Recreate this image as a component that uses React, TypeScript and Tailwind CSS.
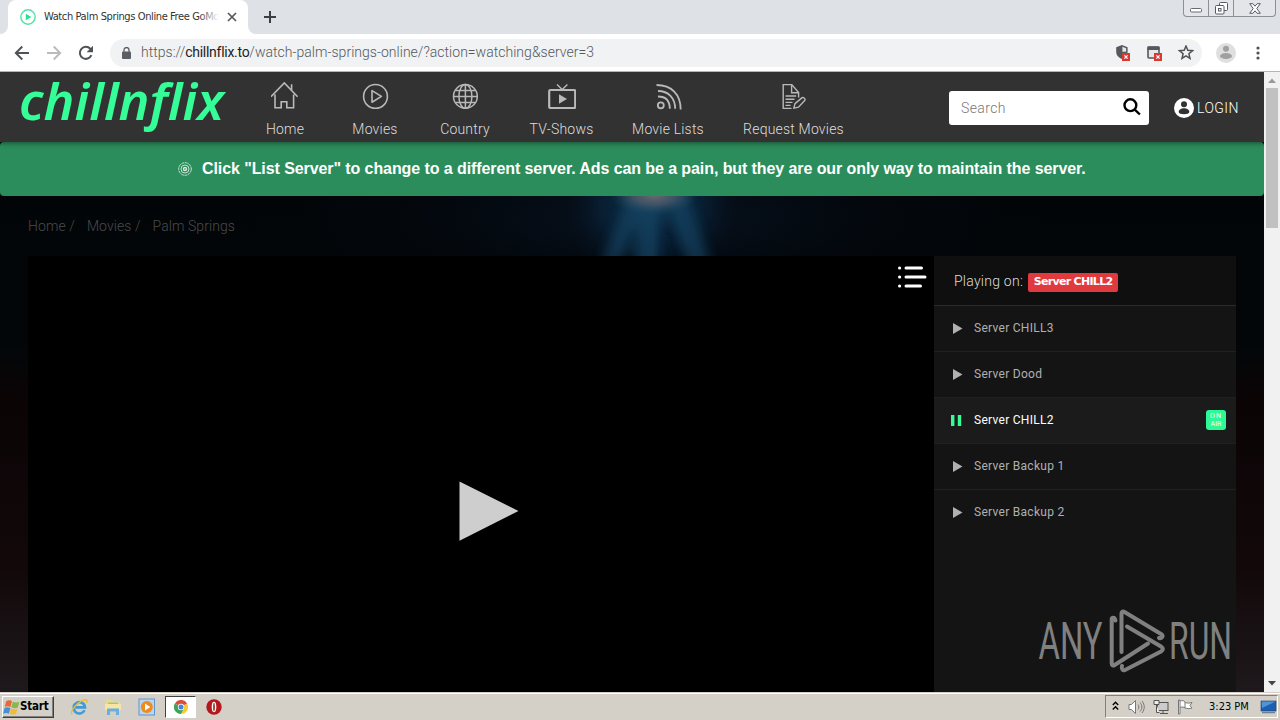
import { ReactNode } from "react"

const ICON_STROKE = "#b9b9b9"

const HomeIcon = () => (
  <svg width="28" height="28" viewBox="0 0 28 28" fill="none" stroke={ICON_STROKE} strokeWidth="1.6">
    <path d="M0 14.7 13.3 .9l13.300 13.800M4 12.500v13.300h6.200v-6h5.600v6h6.800V12.500M20.600 7.900V2.300" />
  </svg>
)

const MoviesIcon = () => (
  <svg width="28" height="28" viewBox="0 0 28 28" fill="none" stroke={ICON_STROKE} strokeWidth="1.6">
    <circle cx="14.500" cy="14.400" r="11.900" />
    <path d="M11 8.600v11.600l9.400-5.800z" strokeLinejoin="round" />
  </svg>
)

const GlobeIcon = () => (
  <svg width="28" height="28" viewBox="0 0 28 28" fill="none" stroke={ICON_STROKE} strokeWidth="1.5">
    <circle cx="14.400" cy="14.400" r="11.900" />
    <ellipse cx="14.400" cy="14.400" rx="6.500" ry="11.900" />
    <path d="M14.400 2.500v23.800M2.500 14.400h23.800M4.600 8.400h19.600M4.600 20.400h19.600" />
  </svg>
)

const TvIcon = () => (
  <svg width="28" height="28" viewBox="0 0 28 28" fill="none" stroke={ICON_STROKE}>
    <rect x="1.200" y="8" width="26" height="18" rx="1.200" strokeWidth="2.200" />
    <path d="m9 2.500 5.200 5 5.200-5" strokeWidth="1.400" />
    <path d="M11 12.200v9.600l8-4.800z" fill={ICON_STROKE} stroke="none" />
  </svg>
)

const FeedIcon = () => (
  <svg width="28" height="28" viewBox="0 0 28 28" fill="none" stroke={ICON_STROKE} strokeWidth="1.8">
    <circle cx="6.800" cy="23.300" r="3" />
    <path d="M4 14.500c7.600 0 11.800 4.400 11.800 12.300M4 9C14.300 9 21.200 15.900 21.200 26.800M2.500 3C17.500 3 26.700 12.200 26.700 27.500" />
  </svg>
)

const RequestIcon = () => (
  <svg width="28" height="28" viewBox="0 0 28 28" fill="none" stroke={ICON_STROKE} strokeWidth="1.4">
    <path d="M11.500 26.400H3.200V2.600h8.600l6.800 8v5M11.600 2.800v8h7M5.500 14h10.600M5.500 17.200h9M5.500 20.400h7M5.500 23.400h5" />
    <path d="m15 21.600 7.200-6c1-.8 3.700 1.400 2.700 2.700l-6.400 6.900-4.700.9z" />
  </svg>
)

type NavItemProps = {
  label: string
  icon: ReactNode
  className: string
}

const NavItem = ({ label, icon, className }: NavItemProps) => (
  <a className={`flex flex-col items-center ${className}`}>
    {icon}
    <span className="mt-[9px] text-[14px] leading-5 whitespace-nowrap font-light tracking-[0.2px] text-[#dedede]">{label}</span>
  </a>
)

const servers = [
  { name: "Server CHILL3", active: false },
  { name: "Server Dood", active: false },
  { name: "Server CHILL2", active: true },
  { name: "Server Backup 1", active: false },
  { name: "Server Backup 2", active: false },
]

const ServerRow = ({ name, active }: { name: string; active: boolean }) => (
  <li className={`flex h-[46px] items-center border-b border-[#202020] pr-[10px] pb-[2px] pl-[17px] last:border-transparent ${active ? "bg-[#1b1b1b]" : ""}`}>
    {active ? (
      <svg width="12" height="12" className="mr-[11px]" viewBox="0 0 12 12" fill="#35fd97">
        <path d="M0 1h3.400v11H0zM6.800 1h3.400v11H6.800z" />
      </svg>
    ) : (
      <svg width="12" height="12" className="mr-[11px]" viewBox="0 0 12 12" fill="#b0b0b0">
        <path d="M2 1v11l9.500-5.500z" />
      </svg>
    )}
    <span className={`text-[12px] tracking-[0.28px] ${active ? "text-white" : "text-[#b0b0b0]"}`}>{name}</span>
    {active && (
      <span className="ml-auto flex size-5 flex-col items-center justify-center rounded-[3px] bg-[#2dfa94] text-[7px] leading-[8px] text-white">
        <span className="tracking-[1px]">ON</span>
        <span>AIR</span>
      </span>
    )}
  </li>
)

const TabStrip = () => (
  <div className="flex h-[34px] justify-between bg-[#dee1e6]">
    <div className="flex">
      <div className="flex w-2 items-end bg-white">
        <div className="h-full w-full rounded-br-lg bg-[#dee1e6]" />
      </div>
      <div className="flex w-60 items-center rounded-t-lg bg-white pl-3">
        <svg width="16" height="16" viewBox="0 0 16 16" fill="none">
          <circle cx="8" cy="8" r="7.200" stroke="#4fe3a7" strokeWidth="1.400" />
          <path d="M5.800 4.800v6.400L11.300 8z" fill="#1fe58d" />
        </svg>
        <div className="relative mt-px ml-2 w-[175px] overflow-hidden font-['DejaVu_Sans_Condensed','DejaVu_Sans',sans-serif] text-[11px] tracking-[-0.39px] whitespace-nowrap text-[#333]">
          Watch Palm Springs Online Free GoMo
          <div className="absolute inset-y-0 right-0 w-5 bg-linear-to-r from-transparent to-white" />
        </div>
        <svg className="ml-2" width="10" height="10" viewBox="0 0 10 10" stroke="#55585c" strokeWidth="1.700">
          <path d="m1 1 8 8M9 1 1 9" />
        </svg>
      </div>
      <div className="w-2 bg-white">
        <div className="h-full w-full rounded-bl-lg bg-[#dee1e6]" />
      </div>
      <svg className="mt-[11px] ml-2" width="12" height="12" viewBox="0 0 12 12" stroke="#3b3f44" strokeWidth="2">
        <path d="M6 0v12M0 6h12" />
      </svg>
    </div>
    <div className="mr-1 flex h-[17px] w-[93px] rounded-b border border-t-0 border-[#8b8f96] bg-[#e3e5e9]">
      <div className="flex w-[25px] items-center justify-center border-r border-[#8b8f96]">
        <svg width="12" height="16" viewBox="0 0 12 16" fill="#fff" stroke="#666b76">
          <rect x="0.500" y="8.500" width="11" height="3.500" rx="1" />
        </svg>
      </div>
      <div className="flex w-[25px] items-center justify-center border-r border-[#8b8f96]">
        <svg width="13" height="14" viewBox="0 0 13 14" fill="#fff" stroke="#555a66">
          <rect x="4.500" y="1.500" width="8" height="8" rx="1" />
          <rect x="0.500" y="4.500" width="8.500" height="8.500" rx="1" />
          <rect x="3.500" y="7.500" width="2.500" height="2.500" />
        </svg>
      </div>
      <div className="flex flex-1 items-center justify-center">
        <svg width="12" height="11" viewBox="0 0 12 11" fill="#fff" stroke="#555a66">
          <path d="M.7.7h3.200L6 3.200 8.100.7h3.200L7.800 5.500l3.500 4.800H8.100L6 7.800l-2.100 2.500H.7l3.500-4.800z" />
        </svg>
      </div>
    </div>
  </div>
)

const Toolbar = () => (
  <div className="flex h-[38px] items-center border-b border-[#b5b5b5] bg-white pl-[14px]">
    <svg width="16" height="16" viewBox="0 0 16 16" fill="none" stroke="#505356" strokeWidth="1.900">
      <path d="M15 8H2M8.300 1.500 1.800 8l6.500 6.500" />
    </svg>
    <svg className="ml-4" width="16" height="16" viewBox="0 0 16 16" fill="none" stroke="#b9bbbd" strokeWidth="1.900">
      <path d="M1 8h13M7.700 1.500 14.200 8l-6.500 6.500" />
    </svg>
    <svg className="ml-4" width="16" height="16" viewBox="0 0 16 16" fill="none" stroke="#505356" strokeWidth="2">
      <path d="M13.400 10.200A6 6 0 1 1 12.300 3.800l1.500 1.600" />
      <path d="M15 .8v6.400H8.600z" fill="#505356" stroke="none" />
    </svg>
    <div className="ml-4 flex h-7 w-[1092px] items-center rounded-full bg-[#f0f2f4] pr-[8px] pl-[12px]">
      <svg width="9" height="12" viewBox="0 0 9 12" fill="#5c5f63">
        <rect y="4.500" width="9" height="7.500" rx="1" />
        <path d="M2 5V3a2.500 2.500 0 0 1 5 0v2" fill="none" stroke="#5c5f63" strokeWidth="1.300" />
      </svg>
      <span className="ml-[10px] text-[14px] font-light tracking-[0.02px] whitespace-nowrap text-[#55585c]">
        https://<span className="font-normal tracking-[-0.28px] text-[#222]">chillnflix.to</span>/watch-palm-springs-online/?action=watching&amp;server=3
      </span>
      <svg className="ml-auto" width="15" height="17" viewBox="0 0 15 17">
        <path d="M7 1 1.200 3.200v4.600c0 3.400 2.400 6 5.800 7.200 3.400-1.200 5.600-3.800 5.600-7.200V3.200z" fill="#55585c" />
        <path d="M7.400 2.800v5h3.700V4.300z" fill="#e5e7e9" />
        <rect x="7" y="9" width="8" height="8" fill="#d83a31" />
        <path d="m9.400 11.400 3.200 3.200m0-3.200-3.200 3.200" stroke="#fff" strokeWidth="1.200" />
      </svg>
      <svg className="ml-[17px]" width="15" height="17" viewBox="0 0 15 17">
        <rect x="1" y="3" width="11" height="11" rx="1" fill="#e5e7e9" stroke="#55585c" strokeWidth="1.600" />
        <path d="M.5 2.500h12V6H.5z" fill="#55585c" />
        <rect x="7" y="9" width="8" height="8" fill="#d83a31" />
        <path d="m9.400 11.400 3.200 3.200m0-3.200-3.200 3.200" stroke="#fff" strokeWidth="1.200" />
      </svg>
      <svg className="ml-4" width="16" height="16" viewBox="0 0 16 16" fill="none" stroke="#505356" strokeWidth="1.500">
        <path d="m8 1 1.800 4.300 4.700.4-3.600 3 1.100 4.600L8 10.800 4 13.300l1.100-4.600-3.600-3 4.700-.4z" />
      </svg>
    </div>
    <svg className="ml-[14px]" width="20" height="20" viewBox="0 0 20 20">
      <circle cx="10" cy="10" r="10" fill="#dfdfdf" />
      <circle cx="10" cy="5.800" r="3" fill="#a0a0a0" />
      <ellipse cx="10" cy="13" rx="6" ry="3" fill="#a0a0a0" />
    </svg>
    <svg className="ml-5" width="4" height="14" viewBox="0 0 4 14" fill="#505356">
      <circle cx="2" cy="2" r="1.600" />
      <circle cx="2" cy="7" r="1.600" />
      <circle cx="2" cy="12" r="1.600" />
    </svg>
  </div>
)

const SiteHeader = () => (
  <header className="relative z-10 flex h-[70px] bg-[#323232] shadow-[0_2px_4px_rgba(0,0,0,0.35)]">
    <svg className="ml-[18px] shrink-0 overflow-visible" width="222" height="70">
      <text x="1" y="47.500" textLength="205" lengthAdjust="spacingAndGlyphs" fontSize="50" fontWeight="600" fontStyle="italic" fill="#35fd97" className="font-['Noto_Sans','Open_Sans',sans-serif]">
        chillnflix
      </text>
    </svg>
    <nav className="flex pt-[10px]">
      <NavItem label="Home" icon={<HomeIcon />} className="w-[90px]" />
      <NavItem label="Movies" icon={<MoviesIcon />} className="w-[90px]" />
      <NavItem label="Country" icon={<GlobeIcon />} className="w-[90px]" />
      <NavItem label="TV-Shows" icon={<TvIcon />} className="w-[103px]" />
      <NavItem label="Movie Lists" icon={<FeedIcon />} className="w-[110px]" />
      <NavItem label="Request Movies" icon={<RequestIcon />} className="w-[141px]" />
    </nav>
    <div className="mt-[19px] ml-[85px] flex h-[34px] w-[200px] items-center justify-between rounded-[3px] bg-white pr-2 pl-3">
      <span className="text-[14px] font-light tracking-[0.400px] text-[#777]">Search</span>
      <svg className="mb-[3px]" width="18" height="18" viewBox="0 0 18 18" fill="none" stroke="#000" strokeWidth="2.400">
        <circle cx="7.400" cy="7.200" r="5.900" />
        <path d="m11.500 11.300 5.400 5.200" />
      </svg>
    </div>
    <div className="mt-[25px] ml-[25px] flex h-[22px] items-center">
      <svg width="20" height="20" viewBox="0 0 20 20">
        <circle cx="10" cy="10" r="10" fill="#fff" />
        <circle cx="10" cy="6.200" r="3" fill="#323232" />
        <path d="M4.700 14c0-5 10.600-5 10.600 0 0 3-10.600 3-10.600 0z" fill="#323232" />
      </svg>
      <span className="ml-[3px] text-[14px] font-light tracking-[0.45px] text-white">LOGIN</span>
    </div>
  </header>
)

const Notice = () => (
  <div className="flex h-[54px] items-center rounded bg-[#2b8d5b] pl-[178px]">
    <svg width="14" height="14" viewBox="0 0 14 14" fill="none" stroke="#d5eadf">
      <circle cx="7" cy="7" r="6.300" strokeWidth=".9" strokeDasharray="3 .6" />
      <circle cx="7" cy="7" r="4" strokeWidth=".9" />
      <circle cx="7" cy="7" r="1.500" strokeWidth="1.400" />
    </svg>
    <span className="ml-[10px] font-['Liberation_Sans',sans-serif] text-[16px] font-bold tracking-[-0.085px] whitespace-nowrap text-white">
      Click "List Server" to change to a different server. Ads can be a pain, but they are our only way to maintain the server.
    </span>
  </div>
)

const Watermark = () => (
  <svg className="absolute top-[534px] left-[1036px] overflow-visible" width="210" height="76" viewBox="0 0 210 76">
    <g fill="#808080" fontSize="52" className="font-[Roboto,sans-serif]">
      <text x="2.500" y="53" textLength="64" lengthAdjust="spacingAndGlyphs">ANY</text>
      <text x="133" y="53" textLength="63" lengthAdjust="spacingAndGlyphs">RUN</text>
    </g>
    <g fill="none" stroke="#808080" strokeWidth="4" strokeLinecap="round" strokeLinejoin="round">
      <path d="M79.500 14.500c-1-4-3.800-3-3.800-1V57.500c0 2 1.500 2.500 3 1.500L112 37.500" />
      <path d="M85.500 46V7.500c0-2 1.500-2.500 3-1.500L125 28c3 2 1 5-2 4" />
      <path d="m91 20.500 34 20c2.500 1.500 2.500 3.500 0 5L89 64c-2 1-4-1-3-4" />
    </g>
  </svg>
)

const Player = () => (
  <div className="flex h-[436px] w-[1208px] overflow-hidden">
    <div className="relative flex h-[510px] w-[906px] items-center bg-black pl-[431px]">
      <svg width="60" height="60" viewBox="0 0 60 60" fill="#cecece">
        <path d="M.5.500v59.300L59.500 30z" />
      </svg>
      <svg className="absolute top-[9px] right-[7px]" width="30" height="24" viewBox="0 0 30 24" stroke="#fff" strokeWidth="3" strokeLinecap="round">
        <path d="M9 3h15.500M9 12h19M9 21h14.500M2.500 3h.2M2.500 12h.2M2.500 21h.2" />
      </svg>
    </div>
    <aside className="h-[510px] w-[302px] bg-[#141414]">
      <div className="flex h-[50px] items-center border-b border-[#2b2b2b] bg-[#0f0f0f] pl-5">
        <span className="mt-px text-[14px] font-light tracking-[0.250px] text-[#ddd]">Playing on:</span>
        <span className="mt-[3px] ml-[5px] flex h-[19px] w-[90px] items-center justify-center rounded-[2px] bg-[#e0393e] pt-px font-['DejaVu_Sans',sans-serif] text-[11px] font-bold tracking-[-0.700px] whitespace-nowrap text-white">
          Server CHILL2
        </span>
      </div>
      <ul>
        {servers.map((server) => (
          <ServerRow key={server.name} name={server.name} active={server.active} />
        ))}
      </ul>
    </aside>
  </div>
)

const Backdrop = () => (
  <svg className="absolute inset-0" width="1264" height="620">
    <defs>
      <radialGradient id="glow">
        <stop offset="0" stopColor="#0e3a55" stopOpacity=".9" />
        <stop offset=".55" stopColor="#0a2740" stopOpacity=".6" />
        <stop offset="1" stopColor="#050a14" stopOpacity="0" />
      </radialGradient>
      <radialGradient id="core">
        <stop offset="0" stopColor="#6f6a70" />
        <stop offset=".5" stopColor="#4e5a68" stopOpacity=".7" />
        <stop offset="1" stopColor="#20485f" stopOpacity="0" />
      </radialGradient>
      <radialGradient id="haze">
        <stop offset="0" stopColor="#071321" />
        <stop offset="1" stopColor="#030509" stopOpacity="0" />
      </radialGradient>
      <linearGradient id="side" x1="0" x2="0" y1="0" y2="1">
        <stop offset="0" stopColor="#020407" />
        <stop offset=".44" stopColor="#030609" />
        <stop offset=".52" stopColor="#0a0405" />
        <stop offset=".8" stopColor="#12080a" />
        <stop offset="1" stopColor="#1e191c" />
      </linearGradient>
      <filter id="soft" x="-30%" y="-30%" width="160%" height="160%">
        <feGaussianBlur stdDeviation="6" />
      </filter>
    </defs>
    <rect width="1264" height="620" fill="url(#side)" />
    <ellipse cx="650" cy="145" rx="400" ry="110" fill="url(#haze)" />
    <ellipse cx="652" cy="130" rx="95" ry="90" fill="url(#glow)" />
    <g fill="#14486b" opacity=".6" filter="url(#soft)">
      <path d="M635 120h28l-2 80h-24zM660 118l24-4 26 76-18 10zM630 120l14 8-26 66-16-4z" />
    </g>
    <path d="M664 140l14 60h-18z" fill="#04101d" opacity=".5" filter="url(#soft)" />
    <ellipse cx="654" cy="123" rx="44" ry="20" fill="url(#core)" />
  </svg>
)

const ScrollBar = () => (
  <div className="flex w-4 flex-col items-center bg-[#f1f1f1]">
    <svg width="16" height="16" viewBox="0 0 16 16" fill="#999">
      <path d="M4 11h8L8 6.500z" />
    </svg>
    <div className="h-[140px] w-3 bg-[#c1c1c1]" />
    <svg className="mt-auto" width="16" height="16" viewBox="0 0 16 16" fill="#444">
      <path d="M4 5h8L8 9.500z" />
    </svg>
  </div>
)

const TaskBar = () => (
  <footer className="flex h-7 items-center border-t border-[#d4d0c8] bg-[#d4d0c8] pl-[2px] shadow-[inset_0_1px_0_#fff]">
    <button className="flex h-[22px] w-[52px] items-center border border-t-white border-r-[#404040] border-b-[#404040] border-l-white pt-px font-['DejaVu_Sans_Condensed','DejaVu_Sans',sans-serif] text-[11.500px] font-bold tracking-[-0.200px] text-black shadow-[inset_-1px_-1px_0_#808080]">
      <svg className="shrink-0" width="17" height="17" viewBox="0 0 16 16">
        <path d="M3 2c2-1 4-1 5.500.200L7 7.600C5.500 6.600 3.500 6.600 1.700 7.400z" fill="#e8683a" />
        <path d="M9.300 2.600c2 1 4 1 6 0L14 8c-2 1-4 1-6.200-.2z" fill="#86b84a" />
        <path d="M1.500 8.300c2-.8 4-.7 5.500.2l-1.500 5.300C4 13 2 13 0 13.800z" fill="#4a8fd0" />
        <path d="M7.600 8.800c2 1 4 1.100 6.100.2L12.300 14c-2 .9-4 .9-6.100-.2z" fill="#f0bb3a" />
      </svg>
      Start
    </button>
    {/* Internet Explorer */}
    <svg className="ml-4" width="18" height="18" viewBox="0 0 18 18" fill="none">
      <path d="M14.500 12.200A5.700 5.700 0 1 1 15 9.400H5" stroke="#3d9bd9" strokeWidth="2.600" />
      <path d="M2 16.200C-.5 13 9 2.200 16 1.800c1.600 0 1 2.200.4 3" stroke="#e8bd3c" strokeWidth="1.400" />
    </svg>
    {/* Explorer */}
    <svg className="ml-4" width="18" height="18" viewBox="0 0 18 18">
      <path d="M2 2h6l1.500 1.500H16V14H2z" fill="#f0d98b" />
      <path d="M4 4.500h10V9H4z" fill="#91cd91" />
      <path d="M1 6h16v6H1z" fill="#f6e6a6" />
      <path d="M3 17v-6.500h12V17h-3v-3.500H6V17z" fill="#68aede" />
    </svg>
    {/* Media player */}
    <svg className="ml-4" width="18" height="18" viewBox="0 0 18 18">
      <rect x="1" y="1" width="15.500" height="16" fill="#b6d6f2" stroke="#6196cd" />
      <circle cx="8.800" cy="9" r="6" fill="#ef8a1d" />
      <path d="M7 5.600v6.800L12.300 9z" fill="#fff" />
    </svg>
    <div className="ml-[9px] flex h-[22px] w-[31px] items-center justify-center border border-t-[#404040] border-r-white border-b-white border-l-[#404040] bg-white">
      <svg width="14" height="14" viewBox="0 0 14 14">
        <path d="M7 7 .9 3.500A7 7 0 0 1 13.100 3.500z" fill="#df4b3b" />
        <path d="M7 7 .9 3.500A7 7 0 0 0 7 14l3-5z" fill="#3da456" />
        <path d="M7 7h0l6.100-3.500A7 7 0 0 1 7 14l3-5.300z" fill="#f6c935" />
        <circle cx="7" cy="7" r="3.200" fill="#fff" />
        <circle cx="7" cy="7" r="2.500" fill="#4384df" />
      </svg>
    </div>
    <svg className="ml-[10px]" width="16" height="16" viewBox="0 0 16 16">
      <circle cx="8" cy="8" r="7.700" fill="#b3181d" />
      <ellipse cx="8" cy="8" rx="2.300" ry="5.200" fill="#fff" />
      <ellipse cx="8" cy="8" rx="1" ry="4.300" fill="#a3474a" />
    </svg>
    <div className="mr-0.5 ml-auto flex h-[23px] w-[173px] items-center border border-t-[#808080] border-r-white border-b-white border-l-[#808080] pl-[6px]">
      <svg className="mb-[2px]" width="7" height="10" viewBox="0 0 7 10" fill="none" stroke="#000" strokeWidth="1.400">
        <path d="m.8 4 2.700-2.700L6.200 4M.8 8.500l2.700-2.700 2.700 2.700" />
      </svg>
      <svg className="ml-[9px]" width="17" height="16" viewBox="0 0 17 16" fill="none" stroke="#777">
        <path d="M1 5.500h2.500L7.500 1.500v13L3.500 10.500H1z" fill="#fff" />
        <path d="M10 5.500c1.200 1.500 1.200 3.500 0 5M12 3.500c2.500 3 2.500 6 0 9M14 2c3 4 3 8 0 12" />
      </svg>
      <svg className="ml-[8px]" width="16" height="16" viewBox="0 0 16 16" fill="#eee" stroke="#555">
        <rect x="4.500" y="3.500" width="10.500" height="8" fill="#ccc" />
        <path d="M7 14.500h8M10 12v2" />
        <path d="M1 1.500h5v4H1zM3.500 5.500v8h3" />
      </svg>
      <svg className="ml-[8px]" width="17" height="16" viewBox="0 0 17 16" fill="#fff" stroke="#777">
        <path d="M1.500 1v14h1.500V1zM3 2c3-1 4 0 5 1v6C7 8 5 7.500 3 8.500M8 3.500c2 .8 4 .8 7 0L13 6.500l2 2.500c-3 1-5 .5-7 0" />
      </svg>
      <span className="mt-px ml-[15px] font-['DejaVu_Sans_Condensed','DejaVu_Sans',sans-serif] text-[11px] whitespace-nowrap text-black">3:23 PM</span>
      <svg className="ml-auto" width="17" height="16" viewBox="0 0 17 16">
        <rect x="1" y="2" width="15" height="10" fill="#1e5fae" stroke="#17406f" strokeWidth=".6" />
        <path d="M1.500 2.500h14L2 9z" fill="#4e94d6" />
        <path d="M2 13.500h13" stroke="#6d7f92" strokeWidth="1.500" />
      </svg>
    </div>
  </footer>
)

const App = () => {
  return (
    <div className="flex h-[720px] w-[1280px] flex-col overflow-hidden font-[Roboto,sans-serif]">
      <TabStrip />
      <Toolbar />
      <div className="flex h-[620px]">
        <main className="relative w-[1264px] overflow-hidden bg-[#030508]">
          <Backdrop />
          <div className="relative">
            <SiteHeader />
            <Notice />
            <div className="flex h-[60px] items-center gap-[12px] pl-7 text-[14px] font-light tracking-[0.080px] text-[#4a4a4c]">
              <span>Home /</span>
              <span>Movies /</span>
              <span>Palm Springs</span>
            </div>
            <div className="pl-7">
              <Player />
            </div>
          </div>
          <Watermark />
        </main>
        <ScrollBar />
      </div>
      <TaskBar />
    </div>
  )
}

export default App
